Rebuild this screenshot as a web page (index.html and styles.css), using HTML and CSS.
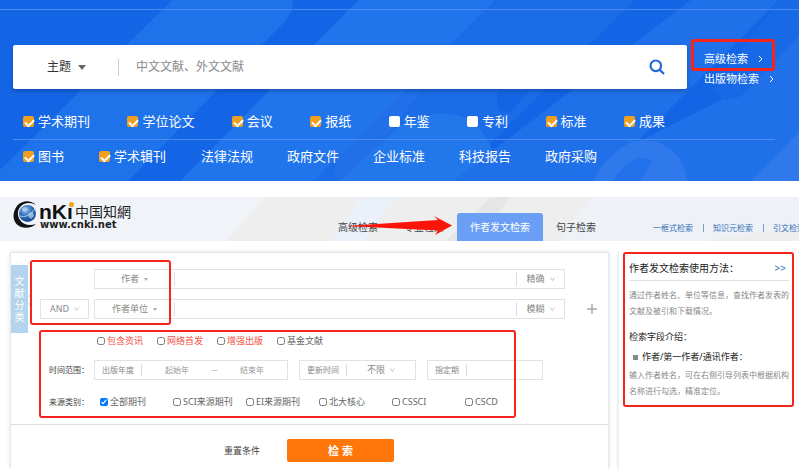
FILE: index.html
```
<!DOCTYPE html>
<html lang="zh-CN">
<head>
    <meta charset="UTF-8">
    <meta name="viewport" content="width=device-width, initial-scale=1.0">
    <title>中国知网 - 作者发文检索</title>
    <link rel="stylesheet" href="styles.css">
</head>
<body>

<section class="banner">
    <svg class="banner-bg" viewBox="0 0 798 181" preserveAspectRatio="none" aria-hidden="true">
        <rect width="798" height="181" fill="#1465e6"/>
        <path d="M172 0H292Q294 10 284 22L128 181H0V170Z" fill="#1e72ea"/>
        <path d="M358 0H495L314 181H180Z" fill="#2075ec"/>
        <path d="M495 0H633L452 181H314Z" fill="#1c6ce8"/>
        <path d="M400 125Q440 105 470 120Q497 140 495 181H340Z" fill="#2277eb"/>
        <path d="M690 0H778L597 181H452Z" fill="#2070ea"/>
        <path d="M798 30V181H560L720 100Z" fill="#2070ea"/>
        <path d="M497 92Q494 120 512 110L530 90Z" fill="#1465e6"/>
        <path d="M712 88Q720 106 740 96L798 36V0H778Z" fill="#1769e5"/>
        <path d="M592 181Q615 140 645 140Q682 145 686 181Z" fill="#3079ec"/>
        <path d="M612 181Q630 152 652 160Q645 170 640 181Z" fill="#2270ea"/>
        <path d="M750 181L798 132V181Z" fill="#3079ec"/>
        <path d="M336 181Q330 160 345 148L400 92H420L350 181Z" fill="#2a78ec" opacity=".4"/>
    </svg>
    <div class="banner-top"></div>
    <div class="search-row">
        <form class="search-box">
            <label class="pick topic">
                <select aria-label="检索字段"><option>主题</option></select>
                <svg width="8" height="5" viewBox="0 0 8 5"><path d="M0 0H8L4 5Z" fill="#666"/></svg>
            </label>
            <input type="text" class="search-input" aria-label="检索词" placeholder="中文文献、外文文献">
            <button type="button" class="search-btn" aria-label="检索">
                <svg width="16" height="16" viewBox="0 0 16 16" fill="none" stroke="#2369d6" stroke-width="2.2"><circle cx="6.8" cy="6.8" r="5.3"/><path d="M10.6 10.6L15 15"/></svg>
            </button>
        </form>
        <div class="search-links">
            <a href="#">高级检索 <svg width="5" height="8" viewBox="0 0 5 8"><path d="M1 1L4 4L1 7"/></svg></a>
            <a href="#">出版物检索 <svg width="5" height="8" viewBox="0 0 5 8"><path d="M1 1L4 4L1 7"/></svg></a>
            <span class="mark mark-link"></span>
        </div>
    </div>
    <div class="types">
        <div class="types-row spread">
            <label><input type="checkbox" checked>学术期刊</label>
            <label><input type="checkbox" checked>学位论文</label>
            <label><input type="checkbox" checked>会议</label>
            <label><input type="checkbox" checked>报纸</label>
            <label><input type="checkbox">年鉴</label>
            <label><input type="checkbox">专利</label>
            <label><input type="checkbox" checked>标准</label>
            <label><input type="checkbox" checked>成果</label>
        </div>
        <div class="types-row second">
            <label><input type="checkbox" checked>图书</label>
            <label><input type="checkbox" checked>学术辑刊</label>
            <a href="#">法律法规</a>
            <a href="#">政府文件</a>
            <a href="#">企业标准</a>
            <a href="#">科技报告</a>
            <a href="#">政府采购</a>
        </div>
    </div>
</section>

<header class="header">
    <svg class="header-bg" viewBox="0 0 798 44" preserveAspectRatio="none" aria-hidden="true">
        <rect width="798" height="44" fill="#eeeeef"/>
        <path d="M0 0H265L225 44H0Z" fill="#f0f4f9"/>
        <path d="M360 0H395L362 44H330Z" fill="#eaf1fb"/>
        <path d="M490 0H510L475 44H445Z" fill="#e6e6e8"/>
        <path d="M590 0H798V30L700 44H560Z" fill="#eef2f7"/>
    </svg>
    <svg class="logo" width="118" height="32" viewBox="0 0 118 32" role="img" aria-label="中国知网">
        <defs>
            <radialGradient id="globe" cx=".4" cy=".3" r=".75">
                <stop offset="0" stop-color="#8dbbe9"/>
                <stop offset=".5" stop-color="#2f6fb9"/>
                <stop offset="1" stop-color="#123f86"/>
            </radialGradient>
        </defs>
        <path d="M23 5C18 0 9 0 4 6C-2 14 0 24 8 27C14 29 20 27 23 24C17 26 10 25 7 20C3 14 5 7 11 4C15 2 20 3 23 5Z" fill="#111"/>
        <circle cx="14.500" cy="13.500" r="8.500" fill="url(#globe)"/>
        <path d="M9 8L13 7L15 10L12 12L9 11ZM16 13L20 12L21 16L18 19L15 16Z" fill="#b9d7f2" opacity=".7"/>
        <path d="M7 16Q14 19 22 9" fill="none" stroke="#d5e6f7" stroke-width=".7"/>
        <text x="26" y="19" class="logo-name">nKı</text>
        <circle cx="58.500" cy="4.500" r="2.600" fill="#f6a21c"/>
        <text x="62" y="17" class="logo-cn">中国知網</text>
        <text x="27" y="28" class="logo-url">www.cnki.net</text>
    </svg>
    <nav class="tabs">
        <a href="#">高级检索</a>
        <a href="#">专业检索</a>
        <a href="#" class="active">作者发文检索</a>
        <a href="#">句子检索</a>
        <svg class="arrow" width="106" height="20" viewBox="0 0 106 20" aria-hidden="true"><path d="M0 10L92 4L88 0L106 9.500L89 19L92 14.500Z" fill="#fb1408"/></svg>
    </nav>
    <div class="header-links">
        <a href="#">一框式检索</a>
        <a href="#">知识元检索</a>
        <a href="#">引文检索</a>
    </div>
</header>

<main class="main">
    <form class="panel">
        <div class="panel-body">
            <div class="side-tab"><span>文献分类</span>
                <svg width="4" height="10" viewBox="0 0 4 10"><path d="M0 0L3 5L0 10" fill="none" stroke="#b5c4d2"/></svg>
            </div>
            <div class="fields">
                <div class="line">
                    <span class="logic-space"></span>
                    <div class="field">
                        <label class="pick name"><select aria-label="字段一"><option>作者</option></select><svg width="4" height="3" viewBox="0 0 4 3"><path d="M0 0H4L2 3Z" fill="#aaa"/></svg></label>
                        <input type="text" aria-label="作者">
                        <label class="pick match"><select aria-label="匹配一"><option>精确</option></select><svg width="5" height="4" viewBox="0 0 5 4"><path d="M.5 .5L2.500 3.500L4.500 .5" class="chev"/></svg></label>
                    </div>
                    <span class="line-end"></span>
                </div>
                <div class="line">
                    <label class="pick logic"><select aria-label="逻辑"><option>AND</option></select><svg width="5" height="4" viewBox="0 0 5 4"><path d="M.5 .5L2.500 3.500L4.500 .5" class="chev"/></svg></label>
                    <div class="field">
                        <label class="pick name"><select aria-label="字段二"><option>作者单位</option></select><svg width="4" height="3" viewBox="0 0 4 3"><path d="M0 0H4L2 3Z" fill="#aaa"/></svg></label>
                        <input type="text" aria-label="作者单位">
                        <label class="pick match"><select aria-label="匹配二"><option>模糊</option></select><svg width="5" height="4" viewBox="0 0 5 4"><path d="M.5 .5L2.500 3.500L4.500 .5" class="chev"/></svg></label>
                    </div>
                    <button type="button" class="line-end" aria-label="添加一行"><svg width="10" height="10" viewBox="0 0 10 10"><path d="M5 0V10M0 5H10" stroke="#aaa" stroke-width="1.500"/></svg></button>
                </div>
                <div class="options">
                    <label class="red"><input type="checkbox">包含资讯</label>
                    <label class="red"><input type="checkbox">网络首发</label>
                    <label class="red"><input type="checkbox">增强出版</label>
                    <label><input type="checkbox">基金文献</label>
                </div>
                <div class="filter">
                    <span class="filter-name">时间范围：</span>
                    <div class="field years">
                        <span class="tag">出版年度</span>
                        <input type="text" aria-label="起始年" placeholder="起始年">
                        <span class="dash">--</span>
                        <input type="text" aria-label="结束年" placeholder="结束年">
                    </div>
                    <div class="field updated">
                        <span class="tag">更新时间</span>
                        <label class="pick"><select aria-label="更新时间"><option>不限</option></select><svg width="5" height="4" viewBox="0 0 5 4"><path d="M.5 .5L2.500 3.500L4.500 .5" class="chev"/></svg></label>
                    </div>
                    <div class="field issue">
                        <label class="tag" for="issue">指定期</label>
                        <input type="text" id="issue">
                    </div>
                </div>
                <div class="filter">
                    <span class="filter-name">来源类别：</span>
                    <div class="sources">
                        <label><input type="checkbox" checked>全部期刊</label>
                        <label><input type="checkbox">SCI来源期刊</label>
                        <label><input type="checkbox">EI来源期刊</label>
                        <label><input type="checkbox">北大核心</label>
                        <label><input type="checkbox">CSSCI</label>
                        <label><input type="checkbox">CSCD</label>
                    </div>
                </div>
            </div>
            <span class="mark mark-names"></span>
            <span class="mark mark-filters"></span>
        </div>
        <div class="actions">
            <button type="reset" class="reset">重置条件</button>
            <button type="button" class="submit">检 索</button>
        </div>
    </form>

    <aside class="help">
        <div class="help-title">
            <h2>作者发文检索使用方法：</h2>
            <a href="#">&gt;&gt;</a>
        </div>
        <p>通过作者姓名、单位等信息，查找作者发表的文献及被引和下载情况。</p>
        <h3>检索字段介绍：</h3>
        <h4>作者/第一作者/通讯作者：</h4>
        <p>输入作者姓名，可在右侧引导列表中根据机构名称进行勾选，精准定位。</p>
        <span class="mark mark-help"></span>
    </aside>
</main>

</body>
</html>
```
FILE: styles.css
```
* {
    box-sizing: border-box;
}

body {
    margin: 0;
    font-family: "Noto Sans", "Noto Sans CJK SC", sans-serif;
    font-size: 9px;
    line-height: 20px;
    color: #666;
    background-color: #fff;
    overflow-x: hidden;
}

a {
    color: inherit;
    text-decoration: none;
}

input,
select,
button {
    margin: 0;
    padding: 0;
    border: none;
    background: none;
    font: inherit;
    color: inherit;
    outline: none;
}

input[type="text"] {
    flex: 1;
    min-width: 0;
}

select {
    appearance: none;
}

button {
    cursor: pointer;
}

svg {
    display: block;
    flex: none;
}

.pick {
    display: flex;
    align-items: center;
    justify-content: center;
    gap: 4px;
}

/* red frames over the content */
.mark {
    position: absolute;
    border: 2px solid #f5251b;
    border-radius: 3px;
    pointer-events: none;
}

/* banner */
.banner {
    position: relative;
    margin-right: 1px;
    padding-bottom: 15px;
    color: #fff;
}

.banner-bg,
.header-bg {
    position: absolute;
    top: 0;
    left: 0;
    width: 100%;
    height: 100%;
    z-index: -1;
}

.banner-top {
    height: 10px;
    border-bottom: 1px solid #4a8bee;
}

.search-row {
    display: flex;
    padding: 35px 24px 0 13px;
}

.search-box {
    flex: 1;
    display: flex;
    align-items: center;
    height: 44px;
    background-color: #fff;
    border-radius: 2px;
    box-shadow: 0 2px 4px rgba(0, 0, 0, 0.25);
    font-size: 12px;
    color: #333;
}

.topic {
    width: 106px;
    height: 17px;
    gap: 6px;
    padding-left: 2px;
    border-right: 1px solid #ccc;
}

.search-input {
    padding-left: 17px;
}

.search-input::placeholder {
    color: #888;
}

.search-btn {
    padding: 0 22px;
}

.search-links {
    position: relative;
    width: 88px;
    padding: 4px 0 0 17px;
    font-size: 11px;
}

.search-links a {
    display: flex;
    align-items: center;
    gap: 10px;
    white-space: nowrap;
}

.search-links path {
    fill: none;
    stroke: #fff;
}

.mark-link {
    top: -6px;
    left: 4px;
    right: 0;
    height: 32px;
    border-width: 3px;
}

.types {
    margin: 0 24px 0 13px;
    font-size: 13px;
}

.types-row {
    display: flex;
    padding: 22px 10px 8px;
}

.types-row label {
    display: flex;
    align-items: center;
    gap: 4px;
}

.types-row input {
    appearance: none;
    width: 11px;
    height: 11px;
    background-color: #fff;
    border-radius: 2px;
}

.types-row input:checked {
    background-color: #efa020;
}

.types-row input:checked::before {
    content: "";
    display: block;
    width: 7px;
    height: 4px;
    margin: 3px 2px;
    border: solid #fff;
    border-width: 0 0 2px 2px;
    transform: rotate(-45deg);
}

.spread {
    justify-content: space-between;
    padding-right: 110px;
    border-bottom: 1px solid #4a8bee;
}

.second {
    gap: 34px;
    padding: 6px 10px 0;
}

.second label {
    margin-right: 1px;
}

/* header */
.header {
    position: relative;
    display: flex;
    height: 44px;
    margin: 16px 1px 0 0;
    padding-left: 13px;
    overflow: hidden;
}

.logo {
    margin-top: 3px;
}

.logo-name {
    font: bold 21px "Liberation Sans", sans-serif;
    fill: #111;
}

.logo-cn {
    font: 14px "Noto Sans CJK SC", sans-serif;
    fill: #222;
}

.logo-url {
    font: bold 10px "DejaVu Sans", sans-serif;
    fill: #222;
}

.tabs {
    position: relative;
    display: flex;
    align-self: flex-end;
    margin-left: 194px;
    font-size: 10px;
    line-height: 28px;
    color: #444;
}

.tabs a {
    padding: 0 13px;
    white-space: nowrap;
}

.tabs .active {
    background-color: #6b9ff5;
    border-radius: 3px 3px 0 0;
    color: #fff;
}

.arrow {
    position: absolute;
    left: 21px;
    top: 3px;
}

.header-links {
    display: flex;
    align-items: center;
    padding: 18px 0 0 44px;
    font-size: 8px;
    line-height: 8px;
    color: #2f6fb7;
    white-space: nowrap;
}

.header-links a + a {
    margin-left: 10px;
    padding-left: 9px;
    border-left: 1px solid #7f9cbf;
}

/* search form */
.main {
    display: flex;
    gap: 9px;
    margin: 11px 1px 0 10px;
}

.panel {
    flex: 1;
    border: 1px solid #e6e9ec;
    border-bottom: none;
    box-shadow: 0 0 4px rgba(0, 0, 0, 0.12);
}

.panel-body {
    position: relative;
    display: flex;
    padding: 12px 0;
    border-bottom: 1px solid #ddd;
}

.side-tab {
    position: relative;
    display: flex;
    align-items: center;
    justify-content: center;
    width: 17px;
    height: 68px;
    background-color: #b4d3ec;
    font-size: 10px;
    line-height: 12px;
    color: #fff;
}

.side-tab span {
    width: 10px;
}

.side-tab svg {
    position: absolute;
    right: -5px;
    top: 30px;
}

.fields {
    flex: 1;
    padding: 4px 0 0 12px;
}

.line {
    display: flex;
    margin-bottom: 10px;
    color: #888;
}

.logic,
.logic-space {
    width: 49px;
    margin-right: 5px;
}

.logic,
.field {
    height: 20px;
    border: 1px solid #e2e2e2;
}

.field {
    flex: 1;
    display: flex;
    align-items: center;
}

.name {
    width: 80px;
    height: 14px;
    border-right: 1px solid #ddd;
}

.match {
    width: 48px;
    height: 14px;
    border-left: 1px solid #ddd;
}

.chev {
    fill: none;
    stroke: #c4c4c4;
}

.line-end {
    width: 43px;
    padding-left: 22px;
}

.options {
    display: flex;
    gap: 14px;
    padding: 2px 0 0 57px;
}

.options label,
.sources label {
    display: flex;
    align-items: center;
    gap: 2px;
    white-space: nowrap;
}

.options input,
.sources input {
    width: 8px;
    height: 8px;
}

.red {
    color: #f4503f;
}

.filter {
    display: flex;
    padding: 9px 0 0 9px;
}

.filter + .filter {
    padding-top: 12px;
}

.filter-name {
    width: 45px;
    font-size: 8px;
    color: #444;
}

.filter .field {
    flex: none;
    margin-right: 11px;
    font-size: 8px;
    color: #888;
}

.filter .years {
    width: 194px;
}

.filter .updated {
    width: 117px;
}

.filter .issue {
    width: 116px;
}

.years input {
    text-align: center;
}

.filter ::placeholder {
    color: #999;
}

.dash {
    font-family: "Liberation Sans", sans-serif;
}

.tag {
    padding: 0 7px;
    border-right: 1px solid #ddd;
    line-height: 12px;
}

.updated .pick {
    flex: 1;
    font-size: 9px;
}

.sources {
    display: grid;
    grid-template-columns: repeat(6, 73px);
    padding-left: 6px;
}

.mark-names {
    top: 7px;
    left: 19px;
    width: 141px;
    height: 65px;
}

.mark-filters {
    top: 77px;
    left: 28px;
    width: 477px;
    height: 88px;
}

.actions {
    display: flex;
    align-items: center;
    gap: 27px;
    padding: 14px 0 7px 213px;
    color: #444;
}

.submit {
    width: 107px;
    height: 23px;
    background-color: #ff760a;
    border-radius: 2px;
    font-size: 11px;
    font-weight: bold;
    color: #fff;
}

/* help */
.help {
    position: relative;
    width: 181px;
    padding: 6px 10px 0;
    border-left: 1px solid #eee;
    box-shadow: -1px 0 2px rgba(0, 0, 0, 0.08);
    font-size: 8px;
    line-height: 16px;
    color: #888;
}

.help h2,
.help h3,
.help h4,
.help p {
    margin: 0;
    font-weight: normal;
}

.help-title {
    display: flex;
    justify-content: space-between;
    padding: 0 3px 2px 0;
    border-bottom: 1px solid #e2e2e2;
    font-size: 10px;
    line-height: 20px;
}

.help h2 {
    font-size: 10px;
    color: #222;
}

.help-title a {
    color: #2f6fb7;
}

.help p {
    padding-top: 6px;
}

.help h3 {
    padding-top: 8px;
    font-size: 9px;
    line-height: 20px;
    color: #222;
}

.help h4 {
    display: flex;
    align-items: center;
    gap: 4px;
    padding-left: 4px;
    font-size: 9px;
    line-height: 20px;
    color: #222;
}

.help h4::before {
    content: "";
    width: 5px;
    height: 5px;
    background-color: #888;
}

.help h4 + p {
    padding: 0;
}

.mark-help {
    top: 0;
    left: 4px;
    right: 5px;
    height: 155px;
}
```
